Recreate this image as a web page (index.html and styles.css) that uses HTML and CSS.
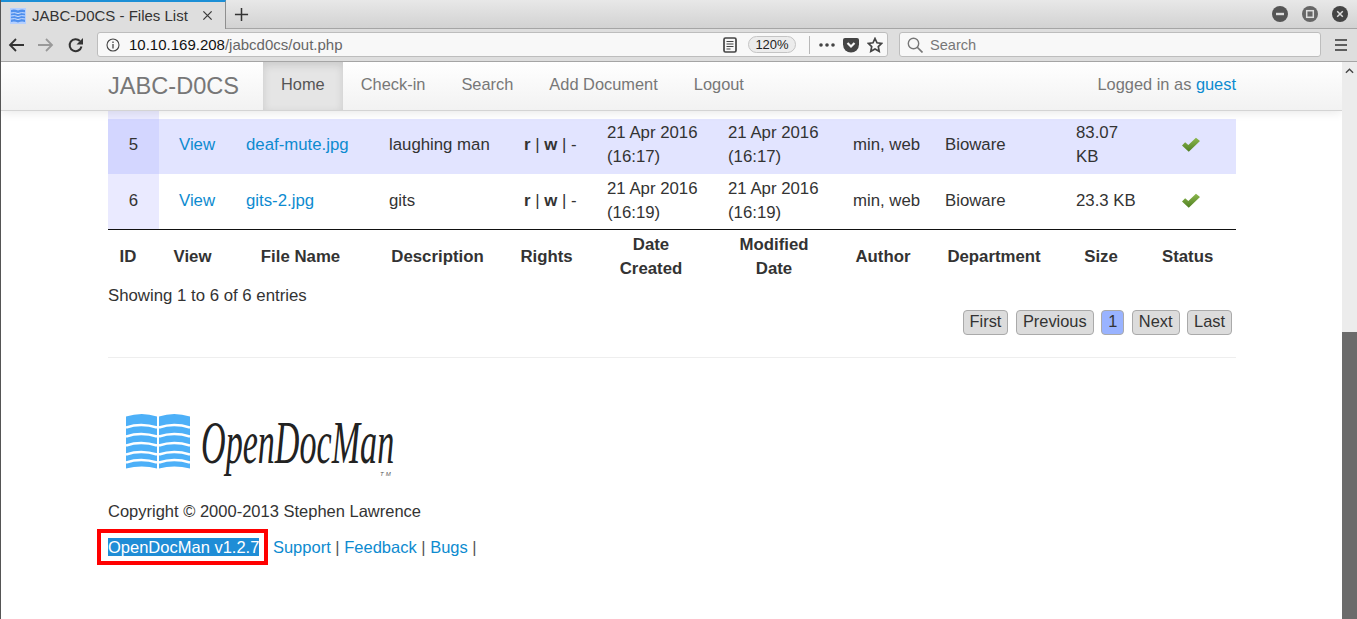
FILE: index.html
```html
<!DOCTYPE html>
<html lang="en">
<head>
  <meta charset="UTF-8" />
  <title>JABC-D0CS - Files List</title>
  <link rel="stylesheet" href="styles.css">
</head>
<body>
  <div class="tabbar">
    <div class="tab">
      <svg class="favicon" viewBox="0 0 16 16"><rect width="16" height="16" fill="#b5d0ff"/><path d="M1 2q3.500-1 7 .5 3.500-1.500 7-.5v12q-3.500-1-7 .5-3.500-1.500-7-.5z" fill="#4f90ee"/><path d="M1 5q3.500-1 7 .5 3.500-1.500 7-.5M1 8q3.500-1 7 .5 3.500-1.500 7-.5M1 11q3.500-1 7 .5 3.500-1.500 7-.5" fill="none" stroke="#cfe0ff"/></svg>
      <span class="tab-title">JABC-D0CS - Files List</span>
      <svg class="tab-close" viewBox="0 0 12 12"><path d="M1.500 1.500l9 9M10.500 1.500l-9 9" stroke="#3a3a3a" stroke-width="1.400"/></svg>
    </div>
    <svg class="tab-new" viewBox="0 0 16 16"><path d="M8 1v14M1 8h14" stroke="#333" stroke-width="1.600"/></svg>
    <div class="win-btns">
      <svg viewBox="0 0 16 16"><circle cx="8" cy="8" r="8" fill="#555"/><rect x="4" y="6.800" width="8" height="2.400" fill="#ddd"/></svg>
      <svg viewBox="0 0 16 16"><circle cx="8" cy="8" r="8" fill="#666"/><rect x="4.700" y="4.700" width="6.600" height="6.600" fill="none" stroke="#ddd" stroke-width="1.500"/></svg>
      <svg viewBox="0 0 16 16"><circle cx="8" cy="8" r="8" fill="#444"/><path d="M5.200 5.200l5.600 5.600M10.800 5.200l-5.600 5.600" stroke="#ddd" stroke-width="1.500"/></svg>
    </div>
  </div>
  <div class="toolbar">
    <svg class="nav-icon" viewBox="0 0 16 16"><path d="M16 8H2M8 2L2 8l6 6" fill="none" stroke="#333" stroke-width="1.800"/></svg>
    <svg class="nav-icon" viewBox="0 0 16 16"><path d="M0 8h14M8 2l6 6-6 6" fill="none" stroke="#999" stroke-width="1.800"/></svg>
    <svg class="nav-icon" viewBox="0 0 16 16"><path d="M13.500 9.500A6 6 0 1 1 12 4" fill="none" stroke="#333" stroke-width="2"/><path d="M15 1v6.500H8.500z" fill="#333"/></svg>
    <div class="urlbar">
      <svg class="info" viewBox="0 0 14 14"><circle cx="7" cy="7" r="6" fill="none" stroke="#444" stroke-width="1.100"/><path d="M7 6v4.500M7 3.500v1.500" stroke="#444" stroke-width="1.300"/></svg>
      <span class="url"><b>10.10.169.208</b>/jabcd0cs/out.php</span>
      <svg class="reader" viewBox="0 0 14 16"><rect x="1" y="1" width="12" height="14" rx="1.500" fill="none" stroke="#444" stroke-width="1.700"/><path d="M3.500 4.500h7M3.500 7h7M3.500 9.500h7M3.500 12h4" stroke="#444"/></svg>
      <span class="zoom-pill">120%</span>
      <span class="url-sep"></span>
      <svg class="dots" viewBox="0 0 16 4"><circle cx="2" cy="2" r="1.800" fill="#444"/><circle cx="8" cy="2" r="1.800" fill="#444"/><circle cx="14" cy="2" r="1.800" fill="#444"/></svg>
      <svg class="pocket" viewBox="0 0 16 16"><path d="M2 1h12a2 2 0 0 1 2 2v4.500a8 8 0 0 1-16 0V3a2 2 0 0 1 2-2z" fill="#444"/><path d="M4.500 6L8 9.500 11.500 6" fill="none" stroke="#f8f8f8" stroke-width="2.200"/></svg>
      <svg class="star" viewBox="0 0 16 16"><path d="M8 1.500l2 4.300 4.700.6-3.400 3.200.9 4.700L8 12l-4.200 2.300.9-4.700L1.300 6.400 6 5.800z" fill="none" stroke="#444" stroke-width="1.700"/></svg>
    </div>
    <div class="searchbar">
      <svg class="search-icon" viewBox="0 0 16 16"><circle cx="6.500" cy="6.500" r="5.200" fill="none" stroke="#777" stroke-width="1.400"/><path d="M10 10l5.500 5.500" stroke="#777" stroke-width="1.700"/></svg>
      <span>Search</span>
    </div>
    <svg class="menu-icon" viewBox="0 0 12 12"><path d="M0 1h12M0 6h12M0 11h12" stroke="#333" stroke-width="1.600"/></svg>
  </div>

  <div class="viewport">
    <div class="page">
      <div class="navbar">
        <div class="nav-inner">
          <span class="brand">JABC-D0CS</span>
          <a class="nav-link active">Home</a>
          <a class="nav-link">Check-in</a>
          <a class="nav-link">Search</a>
          <a class="nav-link">Add Document</a>
          <a class="nav-link">Logout</a>
          <span class="logged">Logged in as <a>guest</a></span>
        </div>
      </div>

      <div class="container">
        <table class="files">
          <colgroup>
            <col class="c-id"><col class="c-view"><col class="c-name"><col class="c-desc"><col class="c-rights"><col class="c-date"><col class="c-mod"><col class="c-author"><col class="c-dept"><col class="c-size"><col class="c-status">
          </colgroup>
          <tbody>
            <tr class="stub">
              <td class="id"></td>
              <td colspan="10"></td>
            </tr>
            <tr class="odd">
              <td class="id">5</td>
              <td><a>View</a></td>
              <td><a>deaf-mute.jpg</a></td>
              <td>laughing man</td>
              <td><b>r</b> | <b>w</b> | -</td>
              <td>21 Apr 2016 (16:17)</td>
              <td>21 Apr 2016 (16:17)</td>
              <td>min, web</td>
              <td>Bioware</td>
              <td class="size">83.07 KB</td>
              <td><svg class="check" viewBox="0 0 20 16"><defs><linearGradient id="ok" x1="0" y1="0" x2="0" y2="1"><stop offset="0" stop-color="#8db84e"/><stop offset="1" stop-color="#4f7f22"/></linearGradient></defs><path d="M0 9l3.500-3.500 3.500 3L15.500 0.500 20 4 7.500 16z" fill="url(#ok)"/></svg></td>
            </tr>
            <tr>
              <td class="id">6</td>
              <td><a>View</a></td>
              <td><a>gits-2.jpg</a></td>
              <td>gits</td>
              <td><b>r</b> | <b>w</b> | -</td>
              <td>21 Apr 2016 (16:19)</td>
              <td>21 Apr 2016 (16:19)</td>
              <td>min, web</td>
              <td>Bioware</td>
              <td class="size">23.3 KB</td>
              <td><svg class="check" viewBox="0 0 20 16"><path d="M0 9l3.500-3.500 3.500 3L15.500 0.500 20 4 7.500 16z" fill="url(#ok)"/></svg></td>
            </tr>
          </tbody>
          <tfoot>
            <tr>
              <th class="h-id">ID</th>
              <th>View</th>
              <th class="h-name">File Name</th>
              <th class="h-shift">Description</th>
              <th class="h-shift">Rights</th>
              <th class="h-date">Date<br>Created</th>
              <th class="h-date">Modified<br>Date</th>
              <th class="h-author">Author</th>
              <th class="h-dept">Department</th>
              <th class="h-size">Size</th>
              <th class="h-status">Status</th>
            </tr>
          </tfoot>
        </table>
        <div class="info-line">Showing 1 to 6 of 6 entries</div>
        <div class="pager">
          <span class="pg">First</span>
          <span class="pg">Previous</span>
          <span class="pg current">1</span>
          <span class="pg">Next</span>
          <span class="pg">Last</span>
        </div>
        <hr class="rule">
        <div class="logo">
          <svg class="book" viewBox="0 0 64 56">
            <path d="M0 3q16-5 31 0v52q-15-4-31 0z" fill="#4db0f8"/>
            <path d="M33 3q15-5 31 0v52q-16-4-31 0z" fill="#4db0f8"/>
            <path d="M0 14q15-5 31 0M0 23q15-5 31 0M0 32q15-5 31 0M0 41q15-5 31 0M0 49q15-5 31 0M33 14q15-5 31 0M33 23q15-5 31 0M33 32q15-5 31 0M33 41q15-5 31 0M33 49q15-5 31 0" fill="none" stroke="#fff" stroke-width="2.600"/>
          </svg>
          <span class="logo-text">OpenDocMan</span>
          <span class="logo-tm">TM</span>
        </div>
        <p class="copy">Copyright © 2000-2013 Stephen Lawrence</p>
        <p class="links"><span class="selected">OpenDocMan v1.2.7<span class="redbox"></span></span> <a>Support</a> | <a>Feedback</a> | <a>Bugs</a> |</p>
      </div>
    </div>
    <div class="scrollbar">
      <svg class="scroll-up" viewBox="0 0 10 6"><path d="M1 5l4-4 4 4" fill="none" stroke="#444" stroke-width="1.500"/></svg>
      <div class="thumb"></div>
    </div>
  </div>
</body>
</html>
```
FILE: styles.css
```css
* {
  box-sizing: border-box;
}
html, body {
  margin: 0;
  height: 100%;
  overflow: hidden;
}
body {
  width: 1357px;
  height: 619px;
  display: flex;
  flex-direction: column;
  font-family: "Liberation Sans", Arial, sans-serif;
  background: #fff;
  border-left: 1px solid #555;
}
a {
  color: #0d8bd0;
}

/* browser chrome */
.tabbar {
  height: 29px;
  display: flex;
  align-items: center;
  background: linear-gradient(#e8e8e8, #d2d2d2);
  border-bottom: 1px solid #a5a5a5;
  margin-left: -1px;
}
.tab {
  width: 226px;
  height: 29px;
  margin-bottom: -1px;
  display: flex;
  align-items: center;
  background: #dedede;
  border-top: 2px solid #1c8fd6;
  border-right: 1px solid #8f8f8f;
  padding-left: 10px;
  font-size: 15px;
  color: #333;
}
.favicon {
  width: 16px;
  height: 16px;
}
.tab-title {
  margin-left: 6px;
  flex: 1;
}
.tab-close {
  width: 11px;
  height: 11px;
  margin-right: 12px;
}
.tab-new {
  width: 15px;
  height: 15px;
  margin-left: 8px;
}
.win-btns {
  margin-left: auto;
  margin-right: 9px;
  display: flex;
  gap: 14px;
}
.win-btns svg {
  width: 16px;
  height: 16px;
}
.toolbar {
  height: 33px;
  display: flex;
  align-items: center;
  background: #dedede;
  border-bottom: 1px solid #a5a5a5;
  margin-left: -1px;
  padding-bottom: 1px;
}
.nav-icon {
  width: 16px;
  height: 16px;
  margin-left: 8px;
  margin-right: 6px;
}
.urlbar {
  margin-left: 7px;
  width: 791px;
  height: 25px;
  display: flex;
  align-items: center;
  background: #f8f8f8;
  border: 1px solid #bdbdbd;
  border-radius: 3px;
  font-size: 15px;
  color: #666;
}
.info {
  width: 14px;
  height: 14px;
  margin-left: 8px;
}
.url {
  margin-left: 9px;
  flex: 1;
}
.url b {
  font-weight: normal;
  color: #111;
}
.reader {
  width: 14px;
  height: 16px;
}
.zoom-pill {
  margin-left: 11px;
  width: 48px;
  height: 17px;
  line-height: 15px;
  text-align: center;
  font-size: 13px;
  color: #222;
  background: #ececec;
  border: 1px solid #c4c4c4;
  border-radius: 9px;
}
.url-sep {
  width: 1px;
  height: 18px;
  background: #b8b8b8;
  margin-left: 13px;
}
.dots {
  width: 16px;
  height: 4px;
  margin-left: 9px;
}
.pocket {
  width: 16px;
  height: 16px;
  margin-left: 8px;
}
.star {
  width: 16px;
  height: 16px;
  margin-left: 8px;
  margin-right: 4px;
}
.searchbar {
  margin-left: 11px;
  width: 422px;
  height: 25px;
  display: flex;
  align-items: center;
  background: #f8f8f8;
  border: 1px solid #bdbdbd;
  border-radius: 3px;
  font-size: 14.600px;
  color: #777;
}
.search-icon {
  width: 16px;
  height: 16px;
  margin-left: 7px;
  margin-right: 7px;
}
.menu-icon {
  width: 12px;
  height: 12px;
  margin-left: 14px;
}

/* page */
.viewport {
  flex: 1;
  display: flex;
  min-height: 0;
}
.page {
  flex: 1;
  min-width: 0;
  overflow: hidden;
  font-size: 16.800px;
  line-height: 24px;
  color: #333;
}
.navbar {
  height: 49px;
  background: linear-gradient(#fff, #f2f2f2);
  border-bottom: 1px solid #d4d4d4;
  box-shadow: 0 1px 10px rgba(0, 0, 0, .1);
  position: relative;
}
.nav-inner {
  width: 1128px;
  margin-left: 107px;
  height: 48px;
  display: flex;
  align-items: center;
  color: #777;
  font-size: 16.400px;
}
.brand {
  font-size: 23.600px;
  width: 155px;
}
.nav-link {
  height: 48px;
  line-height: 45px;
  padding: 0 18px;
  color: #777;
}
.nav-link.active {
  background: #e5e5e5;
  color: #555;
  box-shadow: inset 0 3px 8px rgba(0, 0, 0, .125);
}
.logged {
  margin-left: auto;
  padding-bottom: 5px;
}
.container {
  width: 1128px;
  margin-left: 107px;
}
.files {
  width: 1128px;
  table-layout: fixed;
  border-collapse: collapse;
}
.c-id { width: 51px; }
.c-view { width: 67px; }
.c-name { width: 143px; }
.c-desc { width: 135px; }
.c-rights { width: 83px; }
.c-date { width: 121px; }
.c-mod { width: 125px; }
.c-author { width: 92px; }
.c-dept { width: 131px; }
.c-size { width: 106px; }
.c-status { width: 74px; }
.files td {
  padding: 3px 4px 4px 20px;
  height: 55px;
}
.files td.size {
  padding-right: 20px;
}
.files td.id {
  padding-left: 0;
  padding-right: 0;
  text-align: center;
  background: #eaeaff;
}
.files tr.stub td {
  height: 8px;
  padding: 0;
}
.files tr.odd td {
  background: #e2e4ff;
  padding-top: 2px;
  padding-bottom: 5px;
}
.files tr.odd td.id {
  background: #d3d6ff;
}
.files tfoot tr {
  border-top: 1px solid #111;
}
.files th {
  padding: 3px 0;
  height: 52px;
  text-align: center;
  font-weight: bold;
}
.files th.h-id { padding-right: 11px; }
.files th.h-shift { padding-left: 2px; }
.files th.h-name { padding-left: 6px; }
.files th.h-date { padding-left: 7px; }
.files th.h-author { padding-left: 8px; }
.files th.h-dept { padding-left: 7px; }
.files th.h-size { padding-right: 16px; }
.files th.h-status { padding-right: 28px; }
.check {
  width: 18px;
  height: 15px;
  display: block;
  margin-top: -1px;
}
.info-line {
  margin-top: 0;
}
.pager {
  display: flex;
  justify-content: flex-end;
  gap: 7.500px;
  padding-right: 4px;
  margin-top: 2px;
  font-size: 16.400px;
}
.pg {
  height: 25px;
  line-height: 21px;
  padding: 0 6px;
  color: #333;
  background: #dcdcdc;
  border: 1px solid #aaa;
  border-radius: 4px;
}
.pg.current {
  background: #99b3ff;
}
.rule {
  margin: 22px 0 0;
  border: 0;
  border-top: 1px solid #eee;
}
.logo {
  margin-top: 53px;
  height: 78px;
  display: flex;
  align-items: flex-start;
  padding-left: 18px;
}
.book {
  width: 64px;
  height: 57px;
  margin-top: 2px;
}
.logo-text {
  font-family: "Liberation Serif", serif;
  font-style: italic;
  font-size: 62px;
  line-height: 62px;
  color: #222;
  margin-left: 11px;
  display: inline-block;
  transform: scaleX(.55);
  transform-origin: left center;
  width: 195px;
  white-space: nowrap;
}
.logo-tm {
  font-size: 6px;
  font-style: italic;
  letter-spacing: 2px;
  line-height: 7px;
  color: #555;
  margin-top: 60px;
  margin-left: -16px;
}
.copy {
  margin: 10px 0 0;
  font-size: 16.500px;
}
.links {
  margin: 12px 0 0;
  color: #555;
  font-size: 16.500px;
}
.selected {
  position: relative;
  background: #1f8dd6;
  color: #fff;
  margin-right: 9px;
}
.redbox {
  position: absolute;
  left: -11px;
  right: -9px;
  top: -9px;
  bottom: -9px;
  border: 4px solid #f00;
}

/* scrollbar */
.scrollbar {
  width: 15px;
  background: #ececec;
  position: relative;
}
.scroll-up {
  width: 9px;
  height: 6px;
  display: block;
  margin: 6px 0 0 3px;
}
.thumb {
  position: absolute;
  left: 0;
  right: 0;
  top: 270px;
  bottom: 0;
  background: #6b6b6b;
}
```
